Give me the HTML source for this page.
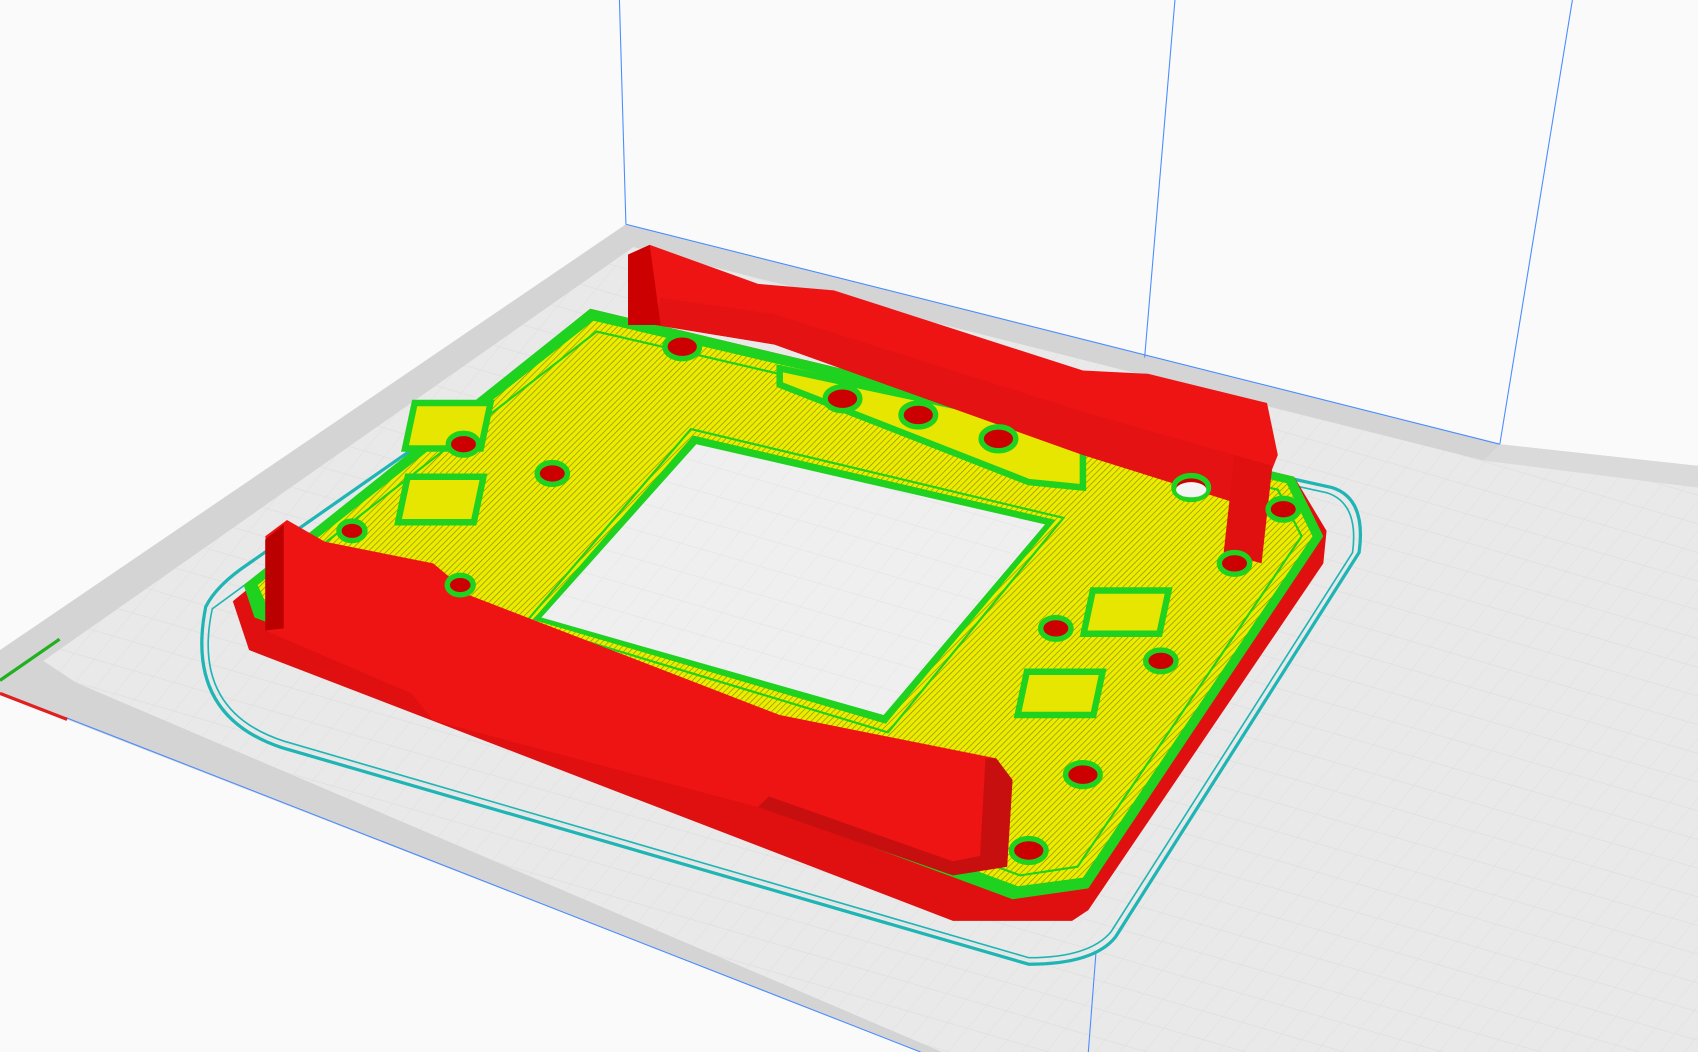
<!DOCTYPE html>
<html><head><meta charset="utf-8"><style>
html,body{margin:0;padding:0;background:#fafafa;overflow:hidden}
svg{display:block}
</style></head><body>
<svg width="1698" height="1052" viewBox="0 0 1568 971" preserveAspectRatio="none" xmlns="http://www.w3.org/2000/svg">
<defs>
<pattern id="grid" width="22" height="22" patternUnits="userSpaceOnUse" patternTransform="skewX(-30) rotate(14)">
<path d="M22 0H0V22" fill="none" stroke="#dedede" stroke-width="1"/>
</pattern>
<pattern id="yel" width="4" height="4" patternUnits="userSpaceOnUse" patternTransform="rotate(45)">
<rect width="4" height="4" fill="#ecec00"/><rect width="0.6" height="4" fill="#8a8a00"/>
</pattern>
</defs>
<rect width="1568" height="971" fill="#fafafa"/>
<!-- plate -->
<polygon points="578,207 1385,410 1568,430 1568,971 850,971 0,640 0,600" fill="#d4d4d4"/>
<polygon points="585,228 1370,425 1568,450 1568,971 870,971 70,630 40,610" fill="#e9e9e9"/>
<polygon points="585,228 1370,425 1568,450 1568,971 870,971 70,630 40,610" fill="url(#grid)"/>
<polygon points="1385,410 1568,430 1568,450 1370,425" fill="#dadada"/>
<!-- blue lines -->
<g stroke="#4a8cff" stroke-width="1" fill="none">
<line x1="572" y1="0" x2="578" y2="207"/>
<line x1="1085" y1="0" x2="1057" y2="330"/>
<line x1="1452" y1="0" x2="1385" y2="410"/>
<line x1="578" y1="207" x2="1385" y2="410"/>
<line x1="60" y1="662" x2="850" y2="971"/>
<line x1="1012" y1="880" x2="1005" y2="971"/>
</g>
<line x1="0" y1="640" x2="62" y2="664" stroke="#e02020" stroke-width="3"/>
<line x1="0" y1="628" x2="55" y2="590" stroke="#20b020" stroke-width="3"/>
<!-- skirt -->
<path d="M545,300 L1230,450 Q1262,460 1255,510 L1030,865 Q1010,890 950,890 L260,690 Q170,660 190,560 Q200,540 230,520 Z" fill="none" stroke="#1fb5b5" stroke-width="3"/>
<path d="M545,306 L1226,455 Q1255,465 1249,510 L1026,860 Q1006,884 950,884 L262,684 Q176,656 196,562 Z" fill="none" stroke="#1fb5b5" stroke-width="1.5"/>
<!-- red base -->
<polygon points="215,555 545,285 1195,440 1225,490 1222,520 1005,840 990,850 880,850 230,600" fill="#e01010"/>
<!-- ring top -->
<polygon points="225,540 545,285 1195,440 1222,495 1005,820 935,830 235,570" fill="#1fd21f"/>
<polygon points="238,540 548,296 1188,446 1212,495 1000,810 940,818 248,562" fill="url(#yel)"/>
<polygon points="250,540 551,306 1180,452 1202,495 995,800 942,808 258,556" fill="none" stroke="#1fd21f" stroke-width="2"/>
<!-- hole -->
<polygon points="485,575 638,396 982,478 820,676" fill="none" stroke="#1fd21f" stroke-width="2"/>
<polygon points="492,572 640,402 975,480 818,668" fill="#1fd21f"/>
<polygon points="500,570 643,410 965,484 816,660" fill="#efefef"/>
<polygon points="500,570 643,410 965,484 816,660" fill="url(#grid)" opacity=".6"/>
<!-- yellow pads with green borders -->
<g fill="#e6e600" stroke="#1fd21f" stroke-width="6">
<rect x="462" y="372" width="70" height="42" transform="skewX(-12)"/>
<rect x="470" y="440" width="70" height="42" transform="skewX(-12)"/>
<rect x="1125" y="545" width="70" height="40" transform="skewX(-12)"/>
<rect x="1080" y="620" width="70" height="40" transform="skewX(-12)"/>
<polygon points="720,340 1000,400 1000,450 950,445 720,355"/>
</g>
<!-- back wall -->
<polygon points="580,235 600,226 700,262 770,268 1000,342 1060,345 1170,372 1180,420 1160,470 1000,420 715,318 605,300 580,300" fill="#ee1414"/>
<polygon points="605,300 715,318 1000,420 1160,470 1175,430 1000,380 715,290 610,275" fill="#e41212"/>
<polygon points="580,235 600,226 610,300 580,300" fill="#c00"/>
<!-- right wall piece -->
<polygon points="1140,420 1175,430 1165,520 1130,510" fill="#e01010"/>
<!-- left wall -->
<polygon points="245,495 265,480 300,500 400,520 430,545 420,560 300,520 250,540" fill="#ee1414"/>
<!-- front wall -->
<polygon points="245,498 430,548 720,660 920,700 935,720 930,800 880,808 700,745 400,665 380,640 245,582" fill="#ee1414"/>
<polygon points="245,498 262,484 262,580 245,582" fill="#b00"/>
<polygon points="700,745 880,808 930,800 935,720 920,700 910,700 905,790 880,795 710,735" fill="#c80f0f"/>
<!-- holes -->
<g fill="#c00" stroke="#1fd21f" stroke-width="5">
<ellipse cx="630" cy="320" rx="16" ry="11"/>
<ellipse cx="778" cy="368" rx="16" ry="11"/>
<ellipse cx="848" cy="383" rx="16" ry="11"/>
<ellipse cx="922" cy="405" rx="16" ry="11"/>
<ellipse cx="428" cy="410" rx="14" ry="10"/>
<ellipse cx="510" cy="437" rx="14" ry="10"/>
<ellipse cx="1100" cy="450" rx="16" ry="11"/>
<ellipse cx="1140" cy="520" rx="14" ry="10"/>
<ellipse cx="1072" cy="610" rx="14" ry="10"/>
<ellipse cx="1000" cy="715" rx="16" ry="11"/>
<ellipse cx="950" cy="785" rx="16" ry="11"/>
<ellipse cx="1185" cy="470" rx="14" ry="10"/>
<ellipse cx="425" cy="540" rx="12" ry="9"/>
<ellipse cx="325" cy="490" rx="12" ry="9"/>
<ellipse cx="975" cy="580" rx="14" ry="10"/>
</g>
<ellipse cx="1100" cy="452" rx="14" ry="7" fill="#f4f4f4"/>
</svg>
</body></html>
